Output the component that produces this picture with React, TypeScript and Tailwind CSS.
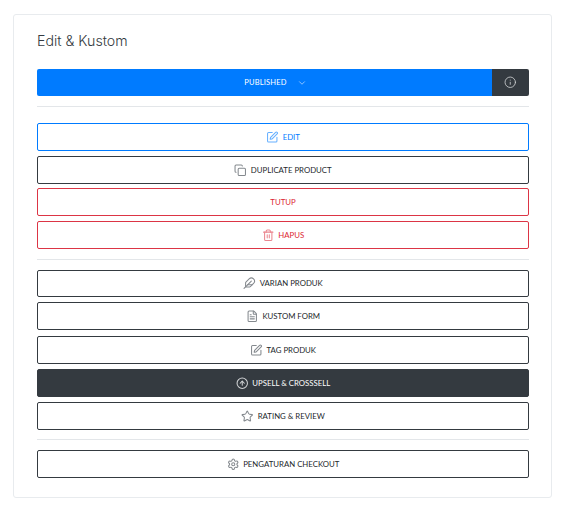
import React from "react";
import { ChevronDown, Info, SquarePen, Copy, Trash2, Feather, FileText, CircleArrowUp, Star, Settings } from "lucide-react";

const base = "flex w-full items-center justify-center gap-[4px] rounded-[2px] border bg-white font-['Lato',sans-serif] text-[7.8px] font-normal";
const dark = "border-[#343a40] text-[#23272b]";
const red = "border-[#dc3545] text-[#dc1f33]";

function Btn({ icon: Icon, label, cls, iconCls }: { icon?: React.ElementType; label: string; cls: string; iconCls?: string }) {
  return (
    <button className={`${base} ${cls}`}>
      {Icon ? <Icon size={12.5} strokeWidth={2} className={iconCls ?? "text-[#84898e]"} /> : null}
      <span className="pt-[1px]">{label}</span>
    </button>
  );
}

function Rule({ cls }: { cls: string }) {
  return <div className={`h-px bg-[#e3e6e9] ${cls}`} />;
}

export default function App() {
  return (
    <div className="min-h-[508px] bg-white pl-[13px] pr-[14px] pt-[14px] font-['Inter','Noto_Sans',sans-serif]">
      <div className="h-[484px] rounded-[3px] border border-[#e8ebee] bg-white pl-[23px] pr-[22px] pt-[16px]">
        <h2 className="h-[38px] text-[14.2px] font-light leading-[20px] text-[#343a40]">Edit &amp; Kustom</h2>
        <div className="flex h-[27px] overflow-hidden rounded-[2px] text-white">
          <div className="flex flex-1 items-center justify-center gap-[10px] bg-[#007bff] pl-[22px] font-['Lato',sans-serif] text-[7.5px] tracking-[0.2px]">
            <span>PUBLISHED</span>
            <ChevronDown size={10} strokeWidth={2} className="text-[#a8d0ff]" />
          </div>
          <div className="flex w-[37px] items-center justify-center bg-[#343a40]">
            <Info size={12.5} strokeWidth={1.6} className="text-[#d0d2d4]" />
          </div>
        </div>
        <Rule cls="mt-[10px]" />
        <div className="mt-[16px] flex flex-col">
          <Btn icon={SquarePen} label="EDIT" cls="h-[28px] border-[#007bff] text-[#007bff]" iconCls="text-[#66b0ff]" />
          <Btn icon={Copy} label="DUPLICATE PRODUCT" cls={`mt-[5px] h-[28px] ${dark}`} />
          <Btn label="TUTUP" cls={`mt-[4px] h-[28px] ${red}`} />
          <Btn icon={Trash2} label="HAPUS" cls={`mt-[5px] h-[28px] ${red}`} iconCls="text-[#ea868f]" />
        </div>
        <Rule cls="mt-[10px]" />
        <div className="mt-[10px] flex flex-col">
          <Btn icon={Feather} label="VARIAN PRODUK" cls={`h-[27px] ${dark}`} />
          <Btn icon={FileText} label="KUSTOM FORM" cls={`mt-[5px] h-[28px] ${dark}`} />
          <Btn icon={SquarePen} label="TAG PRODUK" cls={`mt-[6px] h-[28px] ${dark}`} />
          <Btn icon={CircleArrowUp} label="UPSELL & CROSSSELL" cls="mt-[5px] h-[28px] border-[#343a40] !bg-[#343a40] text-white" iconCls="text-[#d0d2d4]" />
          <Btn icon={Star} label="RATING & REVIEW" cls={`mt-[5px] h-[28px] ${dark}`} />
        </div>
        <Rule cls="mt-[9px]" />
        <div className="mt-[10px]">
          <Btn icon={Settings} label="PENGATURAN CHECKOUT" cls={`h-[28px] ${dark}`} />
        </div>
      </div>
    </div>
  );
}
